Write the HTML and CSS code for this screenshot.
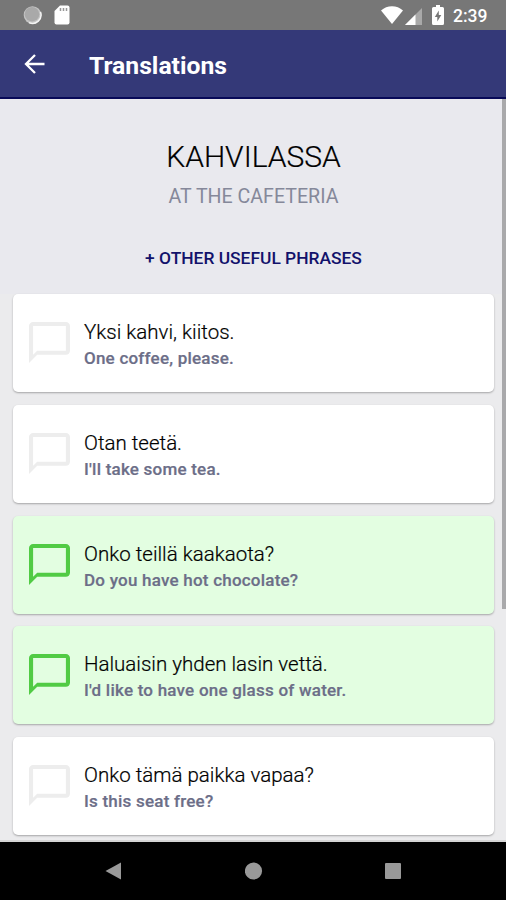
FILE: index.html
```html
<!DOCTYPE html>
<html lang="en">
<head>
<meta charset="utf-8">
<title>Translations</title>
<link rel="stylesheet" href="styles.css">
</head>
<body>
<svg class="defs" width="0" height="0">
  <symbol id="bubble" viewBox="2 2 20 20"><path d="M20 2H4c-1.100 0-2 .9-2 2v18l4-4h14c1.100 0 2-.9 2-2V4c0-1.100-.9-2-2-2zm0 14H6l-2 2V4h16v12z"/></symbol>
</svg>
<div class="status">
  <svg class="sync" width="20" height="20" viewBox="0 0 20 20"><circle cx="9.500" cy="10" r="8.800" fill="#c4c4c4"/><circle cx="9" cy="9.200" r="7.300" fill="#a9a9a9"/><path d="M17.500 7A8.500 8.500 0 0 1 6 17.600" fill="none" stroke="#f4f4f4" stroke-width="1.500"/></svg>
  <svg class="sd" width="16" height="20" viewBox="0 0 16 20"><path fill="#fff" d="M6 .5h7.500a2 2 0 0 1 2 2v15a2 2 0 0 1-2 2h-11a2 2 0 0 1-2-2V6z"/><path stroke="#999" stroke-width="1.500" d="M6.500 3v3M9.500 3v3M12.500 3v3"/></svg>
  <svg class="wifi" width="22" height="18" viewBox="0 0 22 18"><path fill="#fff" d="M11 18L0 4.500C6-1.300 16-1.300 22 4.500z"/></svg>
  <svg class="cell" width="17" height="17" viewBox="0 0 17 17"><path fill="#a9a9a9" d="M17 0v17H0z"/><path fill="#fff" d="M10.500 6.500V17H0z"/></svg>
  <svg class="battery" width="12" height="20" viewBox="0 0 12 20"><path fill="#fff" d="M4 0h4v2h2.500A1.500 1.500 0 0 1 12 3.500v15a1.500 1.500 0 0 1-1.500 1.500h-9A1.500 1.500 0 0 1 0 18.500v-15A1.500 1.500 0 0 1 1.500 2H4z"/><path fill="#777" d="M6.800 5.500L2.800 12h2.500v4.500L9.300 10H6.800z"/></svg>
  <span class="clock">2:39</span>
</div>
<header class="appbar">
  <svg class="back" width="21" height="20" viewBox="0 0 21 20"><path d="M20.500 10H2M11 1L2 10l9 9" fill="none" stroke="#fff" stroke-width="2.300"/></svg>
  <h1 class="title">Translations</h1>
</header>
<main class="content">
  <section class="hero">
    <h2 class="heading">KAHVILASSA</h2>
    <p class="subheading">AT THE CAFETERIA</p>
    <a class="more">+ OTHER USEFUL PHRASES</a>
  </section>
  <section class="list">
    <article class="card"><svg class="bubble"><use href="#bubble"/></svg><div><p class="fi">Yksi kahvi, kiitos.</p><p class="en">One coffee, please.</p></div></article>
    <article class="card"><svg class="bubble"><use href="#bubble"/></svg><div><p class="fi">Otan teetä.</p><p class="en">I'll take some tea.</p></div></article>
    <article class="card done"><svg class="bubble"><use href="#bubble"/></svg><div><p class="fi">Onko teillä kaakaota?</p><p class="en">Do you have hot chocolate?</p></div></article>
    <article class="card done"><svg class="bubble"><use href="#bubble"/></svg><div><p class="fi">Haluaisin yhden lasin vettä.</p><p class="en">I'd like to have one glass of water.</p></div></article>
    <article class="card"><svg class="bubble"><use href="#bubble"/></svg><div><p class="fi">Onko tämä paikka vapaa?</p><p class="en">Is this seat free?</p></div></article>
  </section>
  <div class="scrollbar"></div>
</main>
<nav class="navbar">
  <svg width="18" height="20" viewBox="0 0 18 20"><path fill="#999" d="M.5 10L16 1.500v17z"/></svg>
  <svg width="18" height="18" viewBox="0 0 18 18"><circle cx="8.500" cy="9" r="8.600" fill="#999"/></svg>
  <svg width="16" height="16" viewBox="0 0 16 16"><rect width="16" height="16" rx="1" fill="#999"/></svg>
</nav>
</body>
</html>
```

FILE: styles.css
```css
* { box-sizing: border-box; margin: 0; padding: 0; }
body { width: 506px; height: 900px; overflow: hidden; display: flex; flex-direction: column; background: #ebebed; font-family: Roboto, "Liberation Sans", sans-serif; }
.defs { position: absolute; }
svg { display: block; flex: none; }

.status { height: 30px; flex: none; background: #777; display: flex; align-items: center; padding: 0 19px 0 23px; }
.sd { margin-left: 11px; }
.wifi { margin-left: auto; }
.cell { margin-left: 2px; margin-top: 2px; }
.battery { margin-left: 10px; }
.clock { margin-left: 9px; width: 34px; color: #fff; font-size: 17.500px; font-weight: 500; line-height: 30px; padding-top: 1px; white-space: nowrap; }

.appbar { height: 69px; flex: none; background: #343978; border-bottom: 2px solid #080a58; display: flex; align-items: center; padding-left: 24px; }
.back { margin-top: 1px; }
.title { margin: 5px 0 0 44px; color: #fff; font-size: 24.700px; line-height: 30px; font-weight: 700; white-space: nowrap; }

.content { height: 743px; flex: none; position: relative; overflow: hidden; border-bottom: 2px solid #d5d5d5; }
.hero { height: 195px; background: #e9e9ee; text-align: center; padding-top: 40px; }
.heading { font-size: 30px; line-height: 36px; font-weight: 300; color: #000; padding-left: 1px; -webkit-text-stroke: .2px #000; }
.subheading { margin-top: 10px; font-size: 19.600px; line-height: 24px; color: #85889a; padding-left: 1px; }
.more { display: block; margin-top: 39px; font-size: 17.400px; line-height: 20px; font-weight: 500; color: #12126b; padding-left: 1px; }

.list { padding: 0 12px 0 13px; display: flex; flex-direction: column; gap: 12.800px; }
.card { height: 98px; flex: none; display: flex; align-items: center; gap: 14px; padding-left: 16px; background: #fff; border-radius: 5px; box-shadow: 0 1px 2px rgba(0, 0, 0, .3); }
.bubble { width: 41px; height: 41px; fill: #ededed; margin-top: -1px; }
.fi { margin-top: 4px; font-size: 20.500px; line-height: 26px; font-weight: 300; color: #000; white-space: nowrap; -webkit-text-stroke: .2px #000; }
.en { font-size: 17px; line-height: 24px; margin-top: 1px; padding-bottom: 1px; font-weight: 500; letter-spacing: .22px; color: #6c6e88; white-space: nowrap; -webkit-text-stroke: .2px #6c6e88; }
.done { background: #e3fee1; }
.done .bubble { fill: #51cb44; }
.scrollbar { position: absolute; top: 0; right: 0; width: 4px; height: 510px; background: #a9a9ab; }

.navbar { flex: 1; background: #000; display: flex; justify-content: space-between; align-items: center; padding: 0 105px; }
```
